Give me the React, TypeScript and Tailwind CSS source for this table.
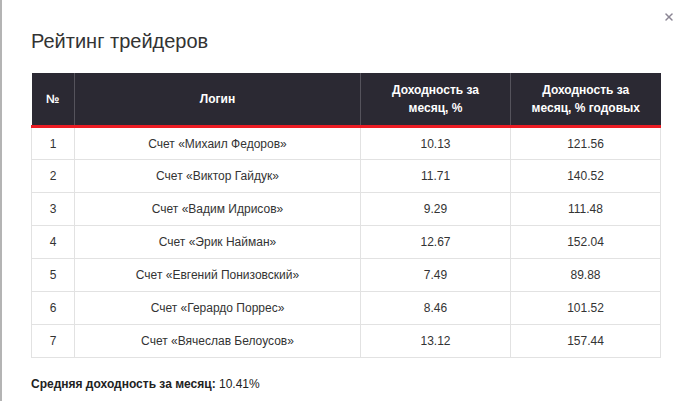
import { X } from "lucide-react";

const rows = [
  { n: 1, login: "Счет «Михаил Федоров»", m: "10.13", y: "121.56" },
  { n: 2, login: "Счет «Виктор Гайдук»", m: "11.71", y: "140.52" },
  { n: 3, login: "Счет «Вадим Идрисов»", m: "9.29", y: "111.48" },
  { n: 4, login: "Счет «Эрик Найман»", m: "12.67", y: "152.04" },
  { n: 5, login: "Счет «Евгений Понизовский»", m: "7.49", y: "89.88" },
  { n: 6, login: "Счет «Герардо Поррес»", m: "8.46", y: "101.52" },
  { n: 7, login: "Счет «Вячеслав Белоусов»", m: "13.12", y: "157.44" },
];

export default function App() {
  return (
    <div className="w-[684px] h-[401px] bg-white border-l-2 border-[#b4b4b4] relative overflow-hidden font-['Liberation_Sans',Arial,sans-serif] text-[#333]">
      <button className="absolute left-[661px] top-[11px] text-[#8b8694]">
        <X className="w-3 h-3" strokeWidth={3} />
      </button>

      <div className="pl-[29px] pt-[29px] w-[661px]">
        <h2 className="text-[20px] leading-6 text-[#333] mb-5">Рейтинг трейдеров</h2>

        <table className="w-[630px] border-collapse text-[12px] text-center">
          <thead>
            <tr className="bg-[#2b2933] text-white font-bold leading-[18px] border-b-[3px] border-[#ec1c24]">
              <th className="w-[43px] h-[53px] border-r border-[#55535c]">№</th>
              <th className="w-[286px] border-r border-[#55535c]">Логин</th>
              <th className="w-[150px] border-r border-[#55535c]">
                Доходность за
                <br />
                месяц, %
              </th>
              <th>
                Доходность за
                <br />
                месяц, % годовых
              </th>
            </tr>
          </thead>
          <tbody>
            {rows.map((r) => (
              <tr key={r.n} className="h-[33px]">
                <td className="border border-[#e2e2e2] pt-px">{r.n}</td>
                <td className="border border-[#e2e2e2] pt-px">{r.login}</td>
                <td className="border border-[#e2e2e2] pt-px">{r.m}</td>
                <td className="border border-[#e2e2e2] pt-px">{r.y}</td>
              </tr>
            ))}
          </tbody>
        </table>

        <p className="text-[12px] mt-[17px] text-[#222]">
          <span className="font-bold">Средняя доходность за месяц:</span> 10.41%
        </p>
      </div>
    </div>
  );
}
